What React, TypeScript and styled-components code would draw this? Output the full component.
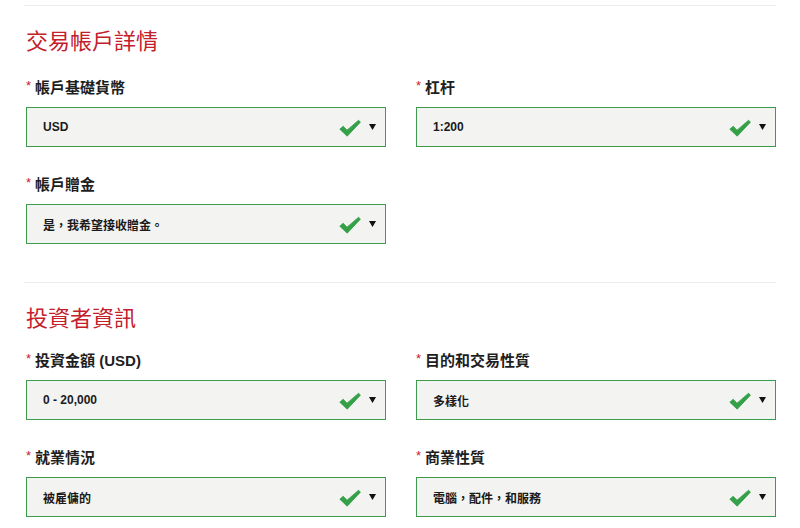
import React from "react";
import styled, { createGlobalStyle } from "styled-components";

const Global = createGlobalStyle`
  html, body { margin: 0; padding: 0; background: #fff; }
  body { font-family: "Liberation Sans", Arial, "Noto Sans CJK TC", sans-serif; color: #222; }
`;

const Page = styled.div`
  width: 800px;
  padding: 5px 24px 0 24px;
  box-sizing: border-box;
`;

const Section = styled.section`
  border-top: 1px solid #ececec;
  padding: 0 0 38px 2px;
`;

const Heading = styled.h2`
  margin: 18px 0 0 0;
  font-family: "Noto Sans CJK TC", "Noto Sans CJK SC", sans-serif;
  font-weight: 400;
  font-size: 22px;
  line-height: 30px;
  color: #c3202c;
`;

const Grid = styled.div<{ $top: number }>`
  display: grid;
  grid-template-columns: 360px 360px;
  column-gap: 30px;
  row-gap: 26px;
  margin-top: ${(p) => p.$top}px;
`;

const Field = styled.div`
  display: flex;
  flex-direction: column;
  gap: 11px;
`;

const Label = styled.label`
  display: flex;
  align-items: center;
  gap: 4px;
  height: 20px;
  font-family: "Liberation Sans", Arial, "Noto Sans CJK TC", sans-serif;
  font-weight: 700;
  font-size: 15px;
  color: #1e1e1e;
`;

const Star = styled.span`
  color: #c3202c;
  font-weight: 400;
  font-size: 13px;
  margin-top: -2px;
`;

const SelectBox = styled.div`
  height: 40px;
  box-sizing: border-box;
  border: 1px solid #3f9a4d;
  background: #f3f3f1;
  display: flex;
  align-items: center;
  padding: 0 8px 0 16px;
  font-family: "Liberation Sans", Arial, "Noto Sans CJK TC", sans-serif;
  font-weight: 700;
  font-size: 12px;
  color: #1a1a1a;
`;

const Value = styled.span`
  flex: 1;
`;

const Check = styled.svg`
  width: 22px;
  height: 18px;
  margin-right: 8px;
  margin-top: 1px;
`;

const Arrow = styled.svg`
  width: 7px;
  height: 6px;
  margin-right: 1px;
`;

type F = { label: string; value: string };

const CheckIcon = () => (
  <Check viewBox="0 0 22 18">
    <path
      d="M0.8 10.2 L4.2 7.2 L8 11.2 L19.6 1.2 L21.4 3.2 L8.2 17.2 Z"
      fill="#34a048"
      stroke="#34a048"
      strokeWidth="0.8"
      strokeLinejoin="round"
    />
  </Check>
);

const ArrowIcon = () => (
  <Arrow viewBox="0 0 7 6">
    <path d="M0 0 H7 L3.5 6 Z" fill="#111" />
  </Arrow>
);

const FieldView = ({ label, value }: F) => (
  <Field>
    <Label>
      <Star>*</Star>
      {label}
    </Label>
    <SelectBox>
      <Value>{value}</Value>
      <CheckIcon />
      <ArrowIcon />
    </SelectBox>
  </Field>
);

const sections: { title: string; top: number; fields: F[] }[] = [
  {
    title: "交易帳戶詳情",
    top: 22,
    fields: [
      { label: "帳戶基礎貨幣", value: "USD" },
      { label: "杠杆", value: "1:200" },
      { label: "帳戶贈金", value: "是，我希望接收贈金。" },
    ],
  },
  {
    title: "投資者資訊",
    top: 18,
    fields: [
      { label: "投資金額 (USD)", value: "0 - 20,000" },
      { label: "目的和交易性質", value: "多樣化" },
      { label: "就業情況", value: "被雇傭的" },
      { label: "商業性質", value: "電腦，配件，和服務" },
    ],
  },
];

export default function App() {
  return (
    <>
      <Global />
      <Page>
        {sections.map((s) => (
          <Section key={s.title}>
            <Heading>{s.title}</Heading>
            <Grid $top={s.top}>
              {s.fields.map((f, i) => (
                <FieldView key={i} {...f} />
              ))}
            </Grid>
          </Section>
        ))}
      </Page>
    </>
  );
}
